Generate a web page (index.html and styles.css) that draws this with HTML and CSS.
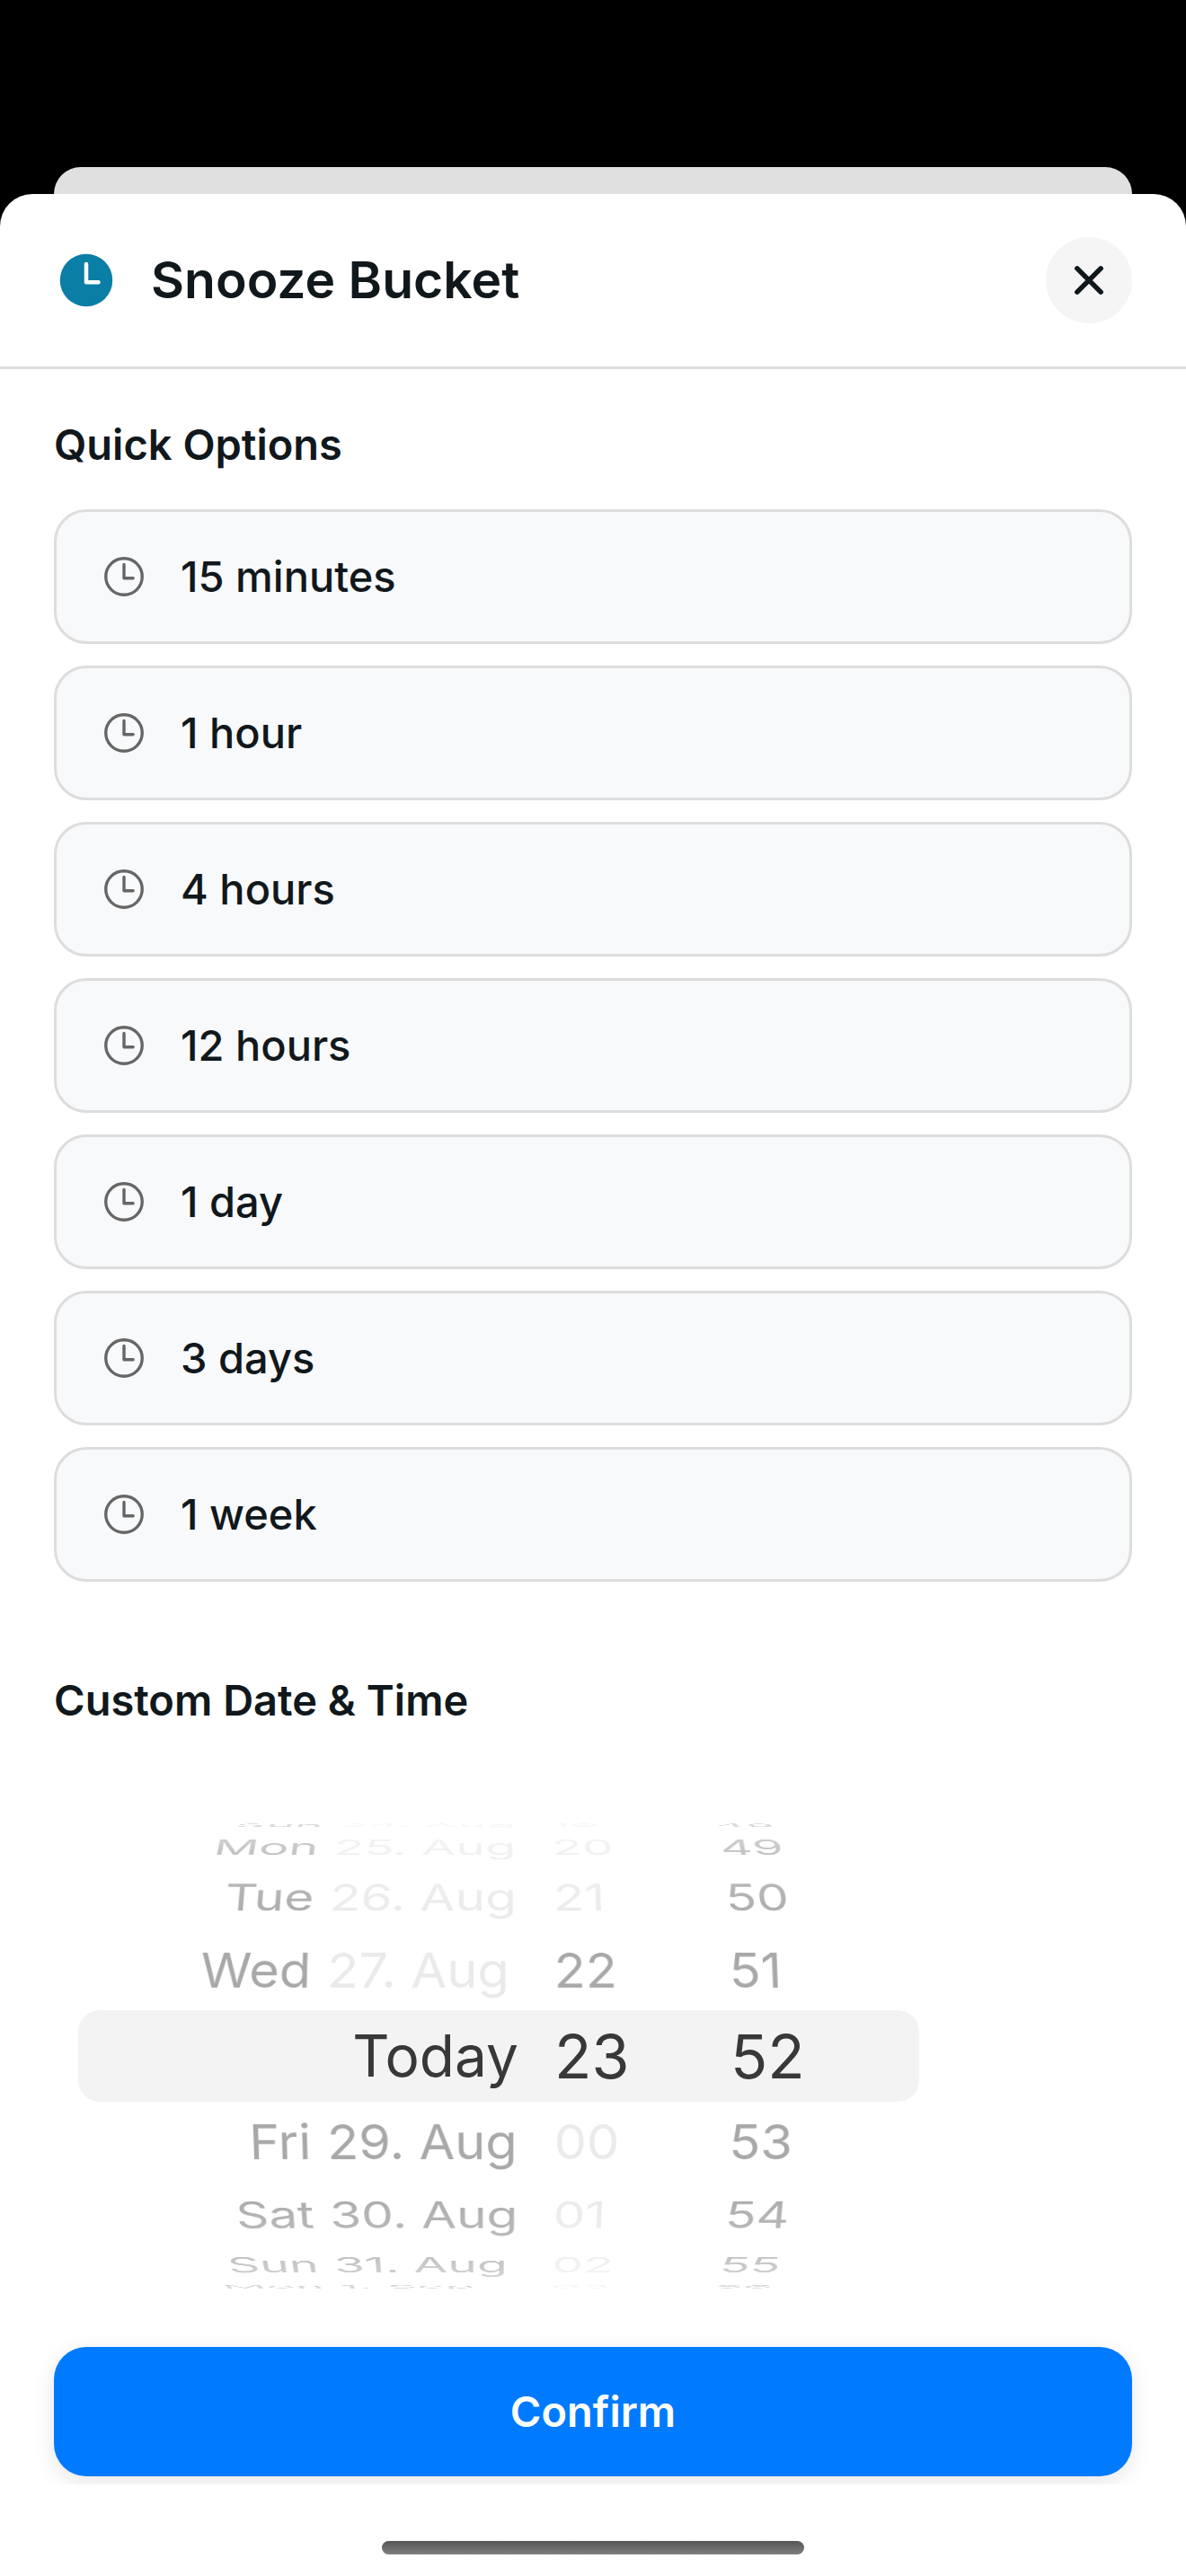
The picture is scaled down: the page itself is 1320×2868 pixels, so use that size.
FILE: index.html
```html
<!DOCTYPE html>
<html lang="en">
<head>
<meta charset="utf-8">
<meta name="viewport" content="width=device-width, initial-scale=1">
<title>Snooze Bucket</title>
<link rel="stylesheet" href="styles.css">
</head>
<body class="screen">
<svg class="sprite" aria-hidden="true">
  <symbol id="clock-outline" viewBox="0 0 512 512">
    <circle cx="256" cy="256" r="192" fill="none" stroke="currentColor" stroke-width="32"/>
    <path d="M256 128v144h96" fill="none" stroke="currentColor" stroke-width="32" stroke-linecap="round" stroke-linejoin="round"/>
  </symbol>
</svg>
<div class="sheet-behind"></div>
<main class="sheet">
  <header class="sheet-header">
    <svg class="header-icon" viewBox="0 0 512 512" aria-hidden="true">
      <circle cx="256" cy="256" r="208" fill="currentColor"/>
      <path d="M256 128v144h96" fill="none" stroke="#fff" stroke-width="32" stroke-linecap="round" stroke-linejoin="round"/>
    </svg>
    <h1 class="title">Snooze Bucket</h1>
    <button class="close" type="button" aria-label="Close">
      <svg class="close-icon" viewBox="0 0 512 512" aria-hidden="true">
        <path d="M144 144l224 224M368 144L144 368" fill="none" stroke="currentColor" stroke-width="48" stroke-linecap="round"/>
      </svg>
    </button>
  </header>
  <div class="content">
    <section class="section">
      <h2 class="section-title">Quick Options</h2>
      <div class="options">
        <button class="option" type="button"><svg class="option-icon" aria-hidden="true"><use href="#clock-outline"/></svg>15 minutes</button>
        <button class="option" type="button"><svg class="option-icon" aria-hidden="true"><use href="#clock-outline"/></svg>1 hour</button>
        <button class="option" type="button"><svg class="option-icon" aria-hidden="true"><use href="#clock-outline"/></svg>4 hours</button>
        <button class="option" type="button"><svg class="option-icon" aria-hidden="true"><use href="#clock-outline"/></svg>12 hours</button>
        <button class="option" type="button"><svg class="option-icon" aria-hidden="true"><use href="#clock-outline"/></svg>1 day</button>
        <button class="option" type="button"><svg class="option-icon" aria-hidden="true"><use href="#clock-outline"/></svg>3 days</button>
        <button class="option" type="button"><svg class="option-icon" aria-hidden="true"><use href="#clock-outline"/></svg>1 week</button>
      </div>
    </section>
    <section class="section">
      <h2 class="section-title">Custom Date &amp; Time</h2>
      <div class="picker">
        <div class="picker-band"></div>
        <div class="wheels">
          <ul class="wheel" role="listbox" aria-label="Date">
            <li class="row up-4" role="option"><span class="day">Sun</span><span class="date off">24. Aug</span></li>
            <li class="row up-3" role="option"><span class="day">Mon</span><span class="date off">25. Aug</span></li>
            <li class="row up-2" role="option"><span class="day">Tue</span><span class="date off">26. Aug</span></li>
            <li class="row up-1" role="option"><span class="day">Wed</span><span class="date off">27. Aug</span></li>
            <li class="row current today" role="option" aria-selected="true"><span class="day">Today</span></li>
            <li class="row down-1" role="option"><span class="day">Fri</span><span class="date">29. Aug</span></li>
            <li class="row down-2" role="option"><span class="day">Sat</span><span class="date">30. Aug</span></li>
            <li class="row down-3" role="option"><span class="day">Sun</span><span class="date">31. Aug</span></li>
            <li class="row down-4" role="option"><span class="day">Mon</span><span class="date">1. Sep</span></li>
          </ul>
          <ul class="wheel" role="listbox" aria-label="Hour">
            <li class="row up-4 off" role="option">19</li>
            <li class="row up-3 off" role="option">20</li>
            <li class="row up-2 off" role="option">21</li>
            <li class="row up-1" role="option">22</li>
            <li class="row current" role="option" aria-selected="true">23</li>
            <li class="row down-1 off" role="option">00</li>
            <li class="row down-2 off" role="option">01</li>
            <li class="row down-3 off" role="option">02</li>
            <li class="row down-4 off" role="option">03</li>
          </ul>
          <ul class="wheel" role="listbox" aria-label="Minute">
            <li class="row up-4" role="option">48</li>
            <li class="row up-3" role="option">49</li>
            <li class="row up-2" role="option">50</li>
            <li class="row up-1" role="option">51</li>
            <li class="row current" role="option" aria-selected="true">52</li>
            <li class="row down-1" role="option">53</li>
            <li class="row down-2" role="option">54</li>
            <li class="row down-3" role="option">55</li>
            <li class="row down-4" role="option">56</li>
          </ul>
        </div>
      </div>
    </section>
    <button class="confirm" type="button">Confirm</button>
  </div>
  <footer class="home-bar"><div class="home-indicator"></div></footer>
</main>
</body>
</html>
```
FILE: styles.css
```css
* {
  box-sizing: border-box;
}

.screen {
  margin: 0;
  min-height: 100vh;
  display: flex;
  flex-direction: column;
  padding-top: 186px;
  background: #000;
  color: #11181c;
  font-family: Inter, "Liberation Sans", sans-serif;
}

.sprite {
  display: none;
}

.sheet-behind {
  height: 62px;
  margin: 0 60px -32px;
  border-radius: 30px 30px 0 0;
  background: #e0e0e0;
}

.sheet {
  flex: 1;
  display: flex;
  flex-direction: column;
  border-radius: 36px 36px 0 0;
  background: #fff;
}

.sheet-header {
  display: flex;
  align-items: center;
  gap: 36px;
  padding: 48px 60px;
  border-bottom: 3px solid #dddddd;
}

.header-icon {
  width: 72px;
  height: 72px;
  color: #0a7ea4;
}

.title {
  flex: 1;
  margin: 0;
  font-size: 57px;
  font-weight: 600;
  line-height: 72px;
}

.close {
  display: flex;
  align-items: center;
  justify-content: center;
  width: 96px;
  height: 96px;
  padding: 0;
  border: 0;
  border-radius: 50%;
  background: #f5f5f5;
  color: #11181c;
}

.close-icon {
  width: 60px;
  height: 60px;
}

.content {
  display: flex;
  flex-direction: column;
  padding: 48px 60px 9px;
  overflow: hidden;
}

.section + .section {
  margin-top: 96px;
}

.section-title {
  margin: 0 0 36px;
  font-size: 47px;
  font-weight: 600;
  line-height: 72px;
}

.options {
  display: flex;
  flex-direction: column;
  gap: 24px;
}

.option {
  display: flex;
  align-items: center;
  gap: 36px;
  height: 150px;
  padding: 0 48px;
  border: 3px solid #dddddd;
  border-radius: 36px;
  background: #f8f9fb;
  color: inherit;
  font: 500 47px/72px Inter, "Liberation Sans", sans-serif;
  text-align: left;
}

.option-icon {
  width: 54px;
  height: 54px;
  color: #666;
}

/* Date and time wheels: rows sit on a cylinder, 20 degrees apart */
.picker {
  display: grid;
  align-items: center;
  max-width: 960px;
  height: 648px;
  margin-left: 15px;
  -webkit-mask-image: linear-gradient(transparent 50px, rgba(0, 0, 0, 0.35) 58px, rgba(0, 0, 0, 0.7) 100px, rgba(0, 0, 0, 0.95) 164px, #000 204px, #000 444px, rgba(0, 0, 0, 0.95) 484px, rgba(0, 0, 0, 0.7) 548px, rgba(0, 0, 0, 0.35) 590px, transparent 598px);
  mask-image: linear-gradient(transparent 50px, rgba(0, 0, 0, 0.35) 58px, rgba(0, 0, 0, 0.7) 100px, rgba(0, 0, 0, 0.95) 164px, #000 204px, #000 444px, rgba(0, 0, 0, 0.95) 484px, rgba(0, 0, 0, 0.7) 548px, rgba(0, 0, 0, 0.35) 590px, transparent 598px);
}

.picker-band {
  grid-area: 1 / 1;
  height: 102px;
  margin: 0 12px;
  border-radius: 24px;
  background: #f3f3f3;
}

.wheels {
  grid-area: 1 / 1;
  display: grid;
  grid-template-columns: 502px 156px 1fr;
  gap: 40px;
  perspective: 3000px;
}

.wheel {
  display: grid;
  margin: 0;
  padding: 0;
  list-style: none;
  transform: translateZ(-281px);
  transform-style: preserve-3d;
}

.row {
  grid-area: 1 / 1;
  display: flex;
  gap: 18px;
  color: #a8a8a8;
  font-size: 58px;
  line-height: 96px;
  backface-visibility: hidden;
}

.day {
  flex: 1;
  text-align: right;
}

.date {
  width: 214px;
  white-space: nowrap;
}

.off {
  color: #eaeaea;
}

.current {
  color: #383838;
  font-size: 68px;
  transform: translateZ(281px);
}

.today {
  font-size: 64px;
}

.up-1 { transform: rotateX(20deg) translateZ(281px); }
.up-2 { transform: rotateX(40deg) translateZ(281px); }
.up-3 { transform: rotateX(60deg) translateZ(281px); }
.up-4 { transform: rotateX(80deg) translateZ(281px); }
.down-1 { transform: rotateX(-20deg) translateZ(281px); }
.down-2 { transform: rotateX(-40deg) translateZ(281px); }
.down-3 { transform: rotateX(-60deg) translateZ(281px); }
.down-4 { transform: rotateX(-80deg) translateZ(281px); }

.confirm {
  height: 144px;
  border: 0;
  border-radius: 36px;
  background: #007aff;
  box-shadow: 0 6px 24px rgba(0, 0, 0, 0.1);
  color: #fff;
  font: 600 47px/72px Inter, "Liberation Sans", sans-serif;
}

.home-bar {
  display: flex;
  justify-content: center;
  margin-top: auto;
  padding: 63px 0 24px;
}

.home-indicator {
  width: 470px;
  height: 15px;
  border-radius: 8px;
  background: linear-gradient(#555, #807e7e);
}
```
